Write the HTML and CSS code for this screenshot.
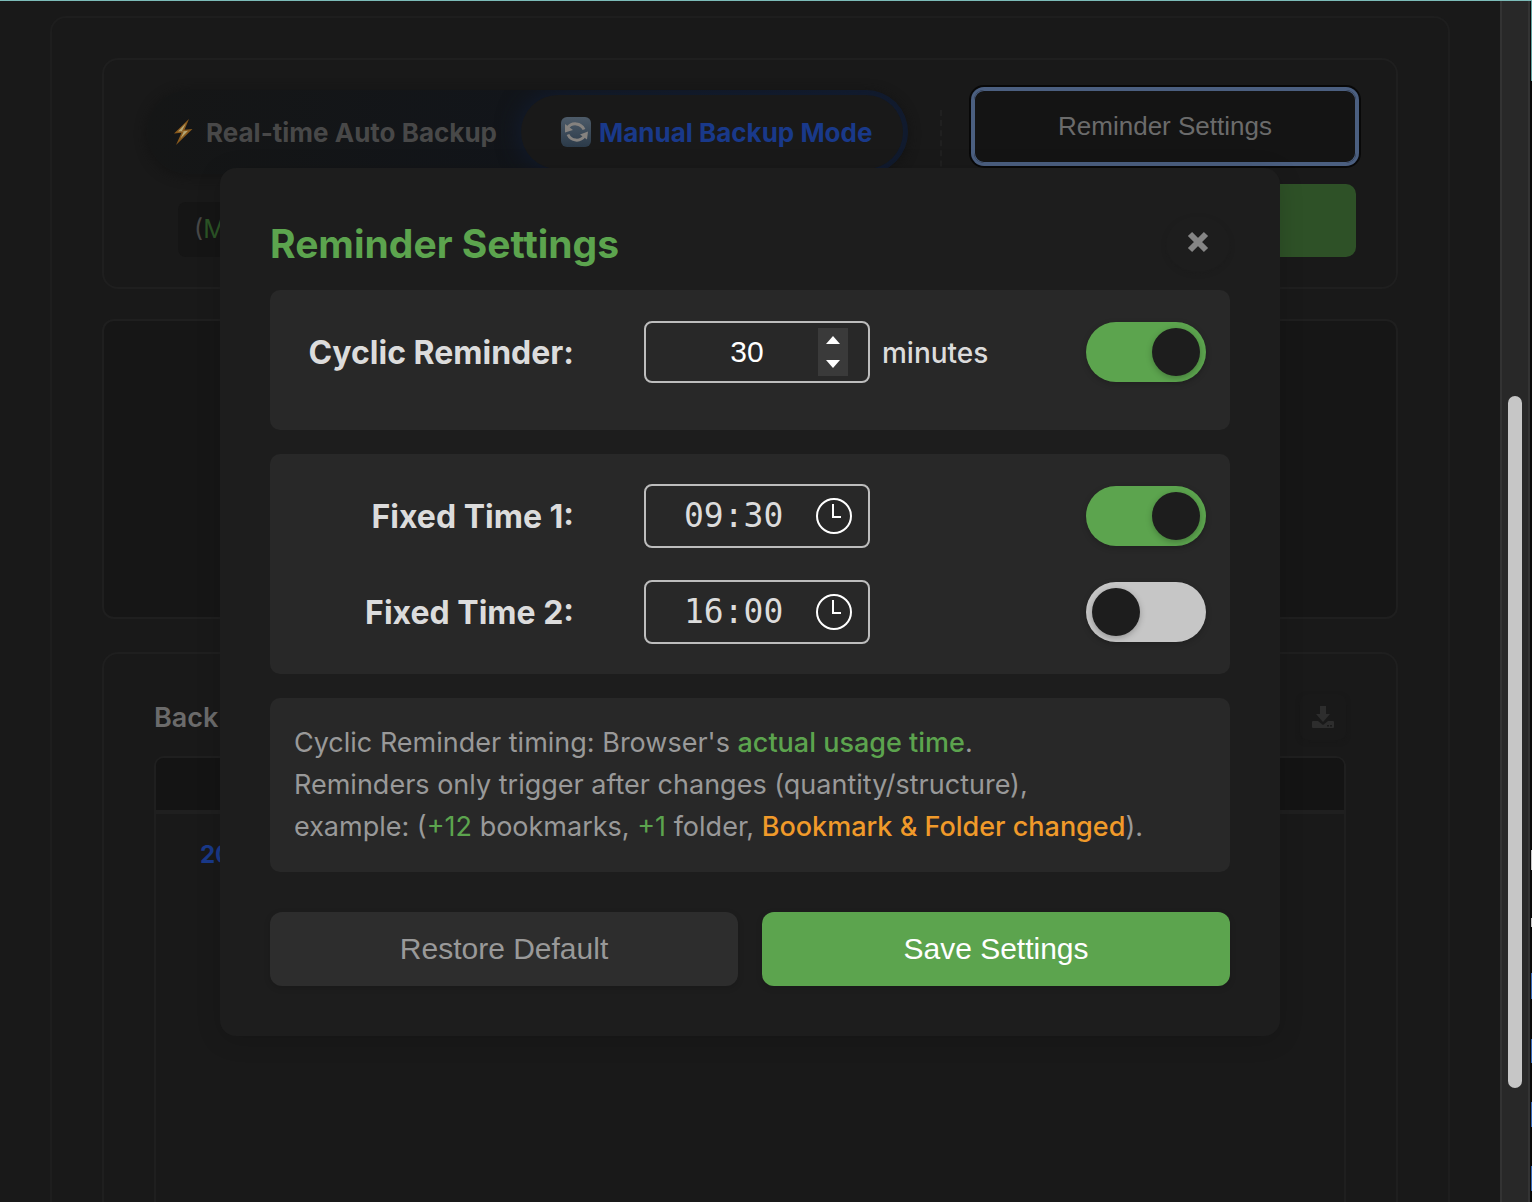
FILE: index.html
```html
<!DOCTYPE html>
<html lang="en">
<head>
<meta charset="utf-8">
<title>Reminder Settings</title>
<link rel="stylesheet" href="styles.css">
</head>
<body>
<div class="app">
  <main class="page">
    <div class="panel">
      <section class="card mode-card">
        <div class="mode-left">
          <div class="mode-switch">
            <button class="mode" type="button">
              <svg class="bolt" viewBox="0 0 20 28" aria-hidden="true"><path d="M16 1 1 15.500l7.500-.8L3 27 19.500 11l-8 .8z" fill="#8a5a1c"/><path d="M13 5 5 13.500l6-.6-3.500 7.600 7.500-7.800-6.300.8z" fill="#b5a674"/></svg>
              Real-time Auto Backup
            </button>
            <button class="mode mode-active" type="button">
              <svg class="sync" viewBox="0 0 32 32" aria-hidden="true">
                <defs><linearGradient id="tile" x1="0" y1="0" x2="0" y2="1"><stop offset="0" stop-color="#4d5b69"/><stop offset="1" stop-color="#2b3a49"/></linearGradient></defs>
                <rect x="1" y="1" width="30" height="30" rx="6" fill="url(#tile)"/>
                <g fill="none" stroke="#85827f" stroke-width="3"><path d="M7.500 12a9.500 9.500 0 0 1 16.500 1.500"/><path d="M24.500 20A9.500 9.500 0 0 1 8 18.500"/></g>
                <path d="M5 8v8.500l8-2.500zM28 15.500l-8 3 7 5z" fill="#85827f"/>
              </svg>
              Manual Backup Mode
            </button>
          </div>
          <p class="status"><span>(</span>M</p>
        </div>
        <div class="divider"></div>
        <div class="mode-actions">
          <button class="btn-reminder" type="button">Reminder Settings</button>
          <button class="btn-backup" type="button" aria-label="Backup"></button>
        </div>
      </section>
      <section class="card blank-card"></section>
      <section class="card history-card">
        <header class="history-head">
          <h2>Back</h2>
          <button class="btn-export" type="button" aria-label="Export">
            <svg viewBox="0 0 22 22" aria-hidden="true"><path fill="currentColor" d="M8 0h6v8h4l-7 8-7-8h4z"/><path fill="currentColor" fill-rule="evenodd" d="M1 15h5l5 4 5-4h5a1 1 0 0 1 1 1v5a1 1 0 0 1-1 1H1a1 1 0 0 1-1-1v-5a1 1 0 0 1 1-1zm14 4v1.500h2V19zm3 0v1.500h2V19z"/></svg>
          </button>
        </header>
        <div class="history">
          <div class="history-bar"></div>
          <div class="history-row">20</div>
        </div>
      </section>
    </div>

    <div class="overlay">
      <div class="modal" role="dialog" aria-labelledby="modal-title">
        <header class="modal-head">
          <h1 id="modal-title">Reminder Settings</h1>
          <button class="close" type="button" aria-label="Close">
            <svg viewBox="0 0 22 22" aria-hidden="true"><path d="M3 3l16 16M19 3 3 19" stroke="currentColor" stroke-width="6" fill="none"/></svg>
          </button>
        </header>

        <section class="group group-cyclic">
          <div class="row">
            <label class="row-label" for="cyclic">Cyclic Reminder:</label>
            <div class="field field-number">
              <input id="cyclic" type="number" value="30" min="1">
              <div class="spinner">
                <button type="button" aria-label="Increase"><svg viewBox="0 0 14 8" aria-hidden="true"><path d="M0 8 7 0l7 8z" fill="#fff"/></svg></button>
                <button type="button" aria-label="Decrease"><svg viewBox="0 0 14 8" aria-hidden="true"><path d="M0 0h14L7 8z" fill="#fff"/></svg></button>
              </div>
            </div>
            <span class="unit">minutes</span>
            <input class="toggle" type="checkbox" aria-label="Cyclic reminder enabled" checked>
          </div>
        </section>

        <section class="group">
          <div class="row">
            <label class="row-label" for="time1">Fixed Time 1:</label>
            <div class="field field-time">
              <input id="time1" type="text" value="09:30">
              <button type="button" class="clock" aria-label="Pick time"><svg viewBox="0 0 36 36" aria-hidden="true"><g fill="none" stroke="#fff" stroke-width="2"><circle cx="18" cy="18" r="17"/><path d="M17 6v13h8"/></g></svg></button>
            </div>
            <input class="toggle" type="checkbox" aria-label="Fixed time 1 enabled" checked>
          </div>
          <div class="row">
            <label class="row-label" for="time2">Fixed Time 2:</label>
            <div class="field field-time">
              <input id="time2" type="text" value="16:00">
              <button type="button" class="clock" aria-label="Pick time"><svg viewBox="0 0 36 36" aria-hidden="true"><g fill="none" stroke="#fff" stroke-width="2"><circle cx="18" cy="18" r="17"/><path d="M17 6v13h8"/></g></svg></button>
            </div>
            <input class="toggle" type="checkbox" aria-label="Fixed time 2 enabled">
          </div>
        </section>

        <p class="group note">Cyclic Reminder timing: Browser's <span class="ok strong">actual usage time</span>.<br>Reminders only trigger after changes (quantity/structure),<br>example: (<span class="ok">+12</span> bookmarks, <span class="ok">+1</span> folder, <span class="warn">Bookmark &amp; Folder changed</span>).</p>

        <footer class="actions">
          <button class="btn btn-restore" type="button">Restore Default</button>
          <button class="btn btn-save" type="button">Save Settings</button>
        </footer>
      </div>
    </div>
  </main>
  <div class="scrollbar"><div class="thumb"></div></div>
  <div class="edge"></div>
</div>
</body>
</html>
```

FILE: styles.css
```css
* { box-sizing: border-box; }

body {
  margin: 0;
  background: #191919;
  font-family: Inter, "Liberation Sans", sans-serif;
}

h1, h2, p { margin: 0; }

button {
  margin: 0;
  padding: 0;
  border: 0;
  background: none;
  color: inherit;
  font-family: "Liberation Sans", Arial, sans-serif;
}

svg { display: block; flex: none; }

.app {
  display: flex;
  height: 100vh;
  overflow: hidden;
  border-top: 1px solid #7cbcb9;
}

/* page behind the dialog */
.page {
  position: relative;
  flex: 1;
  min-width: 0;
  padding: 15px 50px 0;
  overflow: hidden;
}

.panel {
  min-height: 130vh;
  padding: 40px 50px;
  border: 2px solid #1e1e1e;
  border-radius: 16px;
}

.card {
  border: 2px solid #1f1f1f;
  border-radius: 16px;
}

.mode-card {
  display: flex;
  gap: 32px;
  padding: 30px 40px 30px 43px;
}

.mode-left { flex: 1; }

.mode-switch {
  display: flex;
  height: 84px;
  padding: 5px;
  border-radius: 42px;
  overflow: hidden;
  background: linear-gradient(90deg, #151616, #12151a 50%, #111a2c);
  box-shadow: 0 2px 12px #131313;
}

.mode {
  display: flex;
  align-items: center;
  gap: 13px;
  padding-left: 21px;
  width: 369px;
  color: #484848;
  font: 700 26px Inter, sans-serif;
  white-space: nowrap;
}

.mode-active {
  flex: 1;
  gap: 7px;
  padding-left: 39px;
  border-radius: 37px;
  background: #191919;
  box-shadow: 0 0 24px #121d33;
  color: #19398a;
}

.bolt { width: 20px; height: 28px; }
.sync { width: 32px; height: 32px; }

.status {
  width: 400px;
  height: 55px;
  margin: 28px 0 0 31px;
  padding-left: 16px;
  border-radius: 8px;
  background: #151515;
  color: #2b5426;
  font-size: 25px;
  line-height: 55px;
}

.status span { color: #484848; }

.divider {
  width: 2px;
  margin: 20px 0;
  border-left: 2px dashed #202020;
}

.mode-actions {
  display: flex;
  flex-direction: column;
  gap: 21px;
  width: 382px;
}

.btn-reminder,
.btn-backup {
  height: 73px;
  border-radius: 10px;
}

.btn-reminder {
  background: #141414;
  box-shadow: inset 0 0 0 1px #4b5f80, 0 0 0 3px #4b5f80, 0 0 0 5px #080808;
  color: #6b6b6b;
  font-size: 26px;
}

.btn-backup { background: #2e5127; }

.blank-card {
  height: 300px;
  margin: 30px 0 33px;
  border-radius: 12px;
  background: #161616;
}

.history-card {
  min-height: 100vh;
  padding: 40px 50px;
}

.history-head {
  display: flex;
  justify-content: space-between;
  align-items: center;
  height: 46px;
  margin-bottom: 16px;
}

.history-head h2 {
  color: #6b6b6b;
  font-size: 27px;
  font-weight: 600;
}

.btn-export {
  display: grid;
  place-items: center;
  width: 46px;
  height: 46px;
  border-radius: 8px;
  box-shadow: 0 2px 4px #181818;
  color: #2d2d2d;
}

.btn-export svg { width: 22px; height: 22px; }

.history {
  min-height: 80vh;
  border: 2px solid #1f1f1f;
  border-radius: 10px;
}

.history-bar {
  height: 56px;
  border-bottom: 4px solid #1f1f1f;
  border-radius: 8px 8px 0 0;
  background: #141414;
}

.history-row {
  padding: 26px 44px;
  color: #19398a;
  font-size: 24px;
  font-weight: 700;
  line-height: 30px;
}

/* dialog */
.overlay {
  position: absolute;
  inset: 0;
  display: grid;
  place-items: center;
}

.modal {
  width: calc(100% - 440px);
  padding: 48px 50px 50px;
  border-radius: 16px;
  background: #1d1d1d;
  box-shadow: 0 4px 24px rgba(0, 0, 0, 0.15);
}

.modal-head {
  display: flex;
  justify-content: space-between;
  align-items: center;
  height: 56px;
  margin-bottom: 18px;
}

.modal-head h1 {
  color: #5ca44e;
  font-size: 39px;
  font-weight: 700;
}

.close {
  display: grid;
  place-items: center;
  width: 64px;
  height: 56px;
  padding-bottom: 4px;
  border-radius: 50%;
  box-shadow: 0 2px 4px #1c1c1c;
  color: #858585;
}

.close svg { width: 22px; height: 22px; }

.group {
  display: grid;
  gap: 20px;
  margin-bottom: 24px;
  padding: 24px;
  border-radius: 10px;
  background: #282828;
}

.group-cyclic { padding-bottom: 40px; }

.row {
  display: flex;
  align-items: center;
  height: 76px;
}

.row-label {
  width: 280px;
  margin-right: 70px;
  padding-top: 2px;
  color: #dcdcdc;
  font-size: 32px;
  font-weight: 700;
  text-align: right;
  white-space: nowrap;
}

.field {
  display: flex;
  align-items: center;
  width: 226px;
  height: 62px;
  border: 2px solid #bdbdbd;
  border-radius: 8px;
}

.field input {
  flex: 1;
  min-width: 0;
  padding: 0;
  border: 0;
  outline: 0;
  background: none;
}

.field-number { padding: 0 20px 0 30px; }

.field-number input {
  appearance: textfield;
  color: #fff;
  font: 30px "Liberation Sans", Arial, sans-serif;
  text-align: center;
}

.field-number input::-webkit-inner-spin-button { display: none; }

.spinner {
  display: grid;
  width: 30px;
  height: 48px;
  background: #3a3a3a;
}

.spinner button { display: grid; place-items: center; }
.spinner svg { width: 14px; height: 8px; }

.field-time { height: 64px; padding: 0 16px 0 38px; }

.field-time input {
  color: #dcdcdc;
  font: 33px "DejaVu Sans Mono", monospace;
}

.clock svg { width: 36px; height: 36px; }

.unit {
  margin-left: 12px;
  padding-top: 2px;
  color: #dcdcdc;
  font-size: 28px;
  font-weight: 500;
}

.toggle {
  appearance: none;
  width: 120px;
  height: 60px;
  margin: 0 0 0 auto;
  padding: 6px;
  border-radius: 30px;
  background: #c6c6c6;
  box-shadow: 0 2px 6px rgba(0, 0, 0, 0.2);
}

.toggle::before {
  content: "";
  display: block;
  width: 48px;
  height: 48px;
  border-radius: 50%;
  background: #1d1d1d;
  box-shadow: 0 2px 6px rgba(0, 0, 0, 0.25);
}

.toggle:checked { background: #5ca44e; }
.toggle:checked::before { margin-left: auto; }

.note {
  display: block;
  color: #999;
  font-size: 27px;
  line-height: 42px;
  white-space: nowrap;
}

.ok { color: #5ca44e; }
.strong, .warn { font-weight: 500; }
.warn { color: #f09a2a; }

.actions {
  display: grid;
  grid-template-columns: 1fr 1fr;
  gap: 24px;
  margin-top: 40px;
}

.btn {
  height: 74px;
  border-radius: 12px;
  box-shadow: 0 2px 6px rgba(0, 0, 0, 0.15);
  font-size: 30px;
}

.btn-restore { background: #2d2d2d; color: #999; }
.btn-save { background: #5ca44e; color: #fff; }

/* right-hand scroll track */
.scrollbar {
  display: grid;
  grid-template-rows: 395fr 692fr 114fr;
  width: 30px;
  padding: 0 6px;
  border: solid #333;
  border-width: 0 2px;
  background: #282828;
}

.thumb {
  grid-row: 2;
  width: 14px;
  border-radius: 7px;
  background: #c6c6c6;
}

.edge {
  width: 2px;
  border-left: 1px solid #0a0a0a;
  background: linear-gradient(#62a5a3 80px, #0a0a0a 80px 849px, #c6c6c6 849px 869px, #0a0a0a 869px 917px, #c6c6c6 917px 926px, #0a0a0a 926px 972px, #3568b8 972px 998px, #0a0a0a 998px 1038px, #3568b8 1038px 1062px, #0a0a0a 1062px 1101px, #3568b8 1101px 1126px, #0a0a0a 1126px 1165px, #3568b8 1165px 1190px, #0a0a0a 1190px);
}
```
